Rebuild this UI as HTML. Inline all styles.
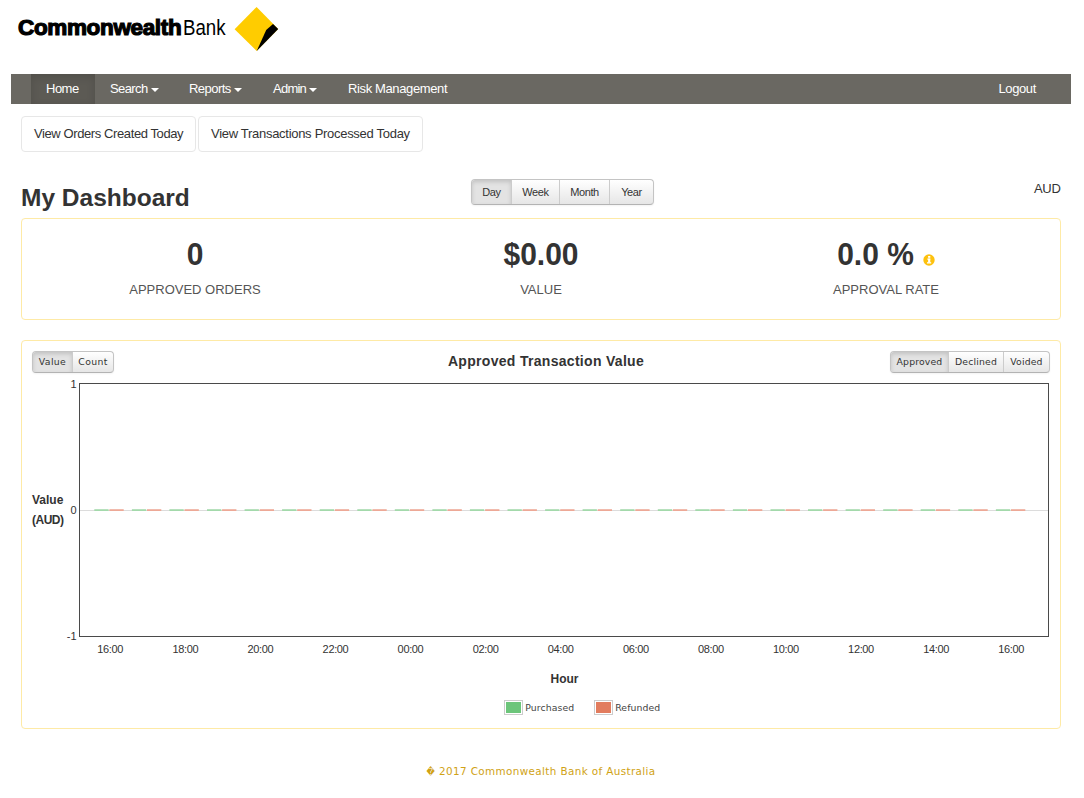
<!DOCTYPE html>
<html lang="en">
<head>
<meta charset="utf-8">
<title>My Dashboard</title>
<style>
*{box-sizing:border-box;margin:0;padding:0}
html,body{width:1084px;height:798px;background:#fff;overflow:hidden}
body{position:relative;font-family:"Liberation Sans",Arial,sans-serif;color:#333;font-size:13px}
.abs{position:absolute}
/* logo */
#logo{left:18px;top:14px;height:28px;white-space:nowrap;line-height:28px;color:#000}
#logo span{display:inline-block;transform-origin:0 50%}
#logo .cw{font-weight:bold;font-size:22.5px;letter-spacing:-0.35px;-webkit-text-stroke:1.2px #000}
#logo .bk{font-weight:normal;font-size:22px;transform:scaleX(.85);margin-left:1.5px}
#diamond{left:232px;top:5px;width:50px;height:50px}
/* navbar */
#nav{left:11px;top:74px;width:1060px;height:30px;background:#6a6862;color:#fff;font-size:13px;line-height:30px;letter-spacing:-.3px}
#nav .it{position:absolute;top:0;height:30px;white-space:nowrap}
#nav .active{background:#5c5a54;box-shadow:inset 0 3px 8px rgba(0,0,0,.125)}
.caret{display:inline-block;width:0;height:0;border-left:4px solid transparent;border-right:4px solid transparent;border-top:4px solid #fff;vertical-align:middle;margin-left:3px;margin-top:1px}
/* sub buttons */
.sbtn{top:116px;height:36px;border:1px solid #e7e7e7;border-radius:4px;line-height:34px;font-size:13px;color:#333;background:#fff;white-space:nowrap;padding-left:12px}
h1{font-size:24.5px;font-weight:bold;left:21px;top:182px;line-height:32px;color:#333;white-space:nowrap}
/* btn groups */
.bg{display:flex;border:1px solid #c4c4c4;border-bottom-color:#b3b3b3;border-radius:4px;background:linear-gradient(#ffffff,#e6e6e6);box-shadow:0 1px 2px rgba(0,0,0,.05);overflow:hidden}
.bg span{display:block;text-align:center;color:#333;border-left:1px solid #ccc;white-space:nowrap}
.bg span:first-child{border-left:0}
.bg span.on{background:#e3e3e3;box-shadow:inset 0 2px 4px rgba(0,0,0,.15)}
.panel{border:1px solid #feeaa6;border-radius:4px;background:#fff}
.stat{top:234.5px;width:346px;text-align:center}
.stat b{display:block;font-size:30px;line-height:40px;color:#333;white-space:nowrap}
.stat b span{display:inline-block;transform:scaleY(1.05);transform-origin:50% 30px}
.stat i{display:block;font-style:normal;font-size:13px;line-height:20px;color:#555;margin-top:5px}
.vd{font-family:"DejaVu Sans",Verdana,sans-serif}
</style>
</head>
<body>
<div id="logo" class="abs"><span class="cw">Commonwealth</span><span class="bk">Bank</span></div>
<svg id="diamond" class="abs" viewBox="0 0 50 50"><polygon points="24.6,2 46.2,24 24.7,46 2.6,24.2" fill="#ffcc00"/><polygon points="41,18.9 46.2,24 24.7,46 34.2,25.1" fill="#000"/></svg>

<div id="nav" class="abs">
  <div class="it active" style="left:20px;width:64px;padding-left:15px;letter-spacing:-.5px">Home</div>
  <div class="it" style="left:99px;letter-spacing:-.6px">Search<span class="caret"></span></div>
  <div class="it" style="left:178px;letter-spacing:-.55px">Reports<span class="caret"></span></div>
  <div class="it" style="left:262px;letter-spacing:-.75px">Admin<span class="caret"></span></div>
  <div class="it" style="left:337px;letter-spacing:-.37px">Risk Management</div>
  <div class="it" style="left:987.5px;letter-spacing:-.4px">Logout</div>
</div>

<div class="abs sbtn" style="left:21px;width:175px;letter-spacing:-.4px">View Orders Created Today</div>
<div class="abs sbtn" style="left:198px;width:225px;letter-spacing:-.29px">View Transactions Processed Today</div>

<h1 class="abs">My Dashboard</h1>

<div class="abs bg" style="left:471px;top:179px;width:183px;height:26px;font-size:11px;line-height:24px;letter-spacing:-.4px">
  <span class="on" style="width:39px">Day</span><span style="width:48px">Week</span><span style="width:50px">Month</span><span style="flex:1">Year</span>
</div>
<div class="abs" style="left:1034px;top:181px;font-size:13px;line-height:16px;color:#333;letter-spacing:-.3px">AUD</div>

<div class="abs panel" style="left:21px;top:218px;width:1040px;height:102px"></div>
<div class="abs stat" style="left:22px"><b><span>0</span></b><i>APPROVED ORDERS</i></div>
<div class="abs stat" style="left:368px"><b><span>$0.00</span></b><i>VALUE</i></div>
<div class="abs stat" style="left:713px"><b><span>0.0 %</span><svg width="12" height="12" viewBox="0 0 12 12" style="vertical-align:-1.5px;margin-left:9px"><circle cx="6" cy="6" r="5.7" fill="#fdc10e"/><rect x="5.1" y="2" width="2.2" height="1.8" fill="#fff"/><rect x="4.2" y="4.6" width="3.1" height="1" fill="#fff"/><rect x="5.1" y="4.6" width="2.2" height="4" fill="#fff"/><rect x="4" y="8.2" width="4.2" height="1.3" fill="#fff"/></svg></b><i>APPROVAL RATE</i></div>

<div class="abs panel" style="left:21px;top:340px;width:1040px;height:389px"></div>

<div class="abs bg vd" style="left:32px;top:351px;width:82px;height:22px;font-size:9.3px;line-height:20px;letter-spacing:.35px">
  <span class="on" style="width:39px">Value</span><span style="flex:1">Count</span>
</div>
<div class="abs" style="left:246px;top:351px;width:600px;text-align:center;font-weight:bold;font-size:14px;line-height:20px;letter-spacing:.3px">Approved Transaction Value</div>
<div class="abs bg vd" style="left:890px;top:351px;width:160px;height:22px;font-size:9.3px;line-height:20px;letter-spacing:.15px">
  <span class="on" style="width:57px">Approved</span><span style="width:55px">Declined</span><span style="flex:1">Voided</span>
</div>

<svg class="abs" style="left:0;top:375px" width="1084" height="345" viewBox="0 375 1084 345" font-family="Liberation Sans, Arial, sans-serif" id="chart">
  <rect x="80" y="510" width="968" height="1" fill="#dcdcdc"/>
  <g id="bars"><rect x="94.3" y="509" width="14.3" height="2" fill="#a3d9ab"/><rect x="109.4" y="509" width="14.3" height="2" fill="#eda896"/><rect x="131.9" y="509" width="14.3" height="2" fill="#a3d9ab"/><rect x="147.0" y="509" width="14.3" height="2" fill="#eda896"/><rect x="169.4" y="509" width="14.3" height="2" fill="#a3d9ab"/><rect x="184.5" y="509" width="14.3" height="2" fill="#eda896"/><rect x="207.0" y="509" width="14.3" height="2" fill="#a3d9ab"/><rect x="222.1" y="509" width="14.3" height="2" fill="#eda896"/><rect x="244.6" y="509" width="14.3" height="2" fill="#a3d9ab"/><rect x="259.7" y="509" width="14.3" height="2" fill="#eda896"/><rect x="282.1" y="509" width="14.3" height="2" fill="#a3d9ab"/><rect x="297.2" y="509" width="14.3" height="2" fill="#eda896"/><rect x="319.7" y="509" width="14.3" height="2" fill="#a3d9ab"/><rect x="334.8" y="509" width="14.3" height="2" fill="#eda896"/><rect x="357.3" y="509" width="14.3" height="2" fill="#a3d9ab"/><rect x="372.4" y="509" width="14.3" height="2" fill="#eda896"/><rect x="394.8" y="509" width="14.3" height="2" fill="#a3d9ab"/><rect x="409.9" y="509" width="14.3" height="2" fill="#eda896"/><rect x="432.4" y="509" width="14.3" height="2" fill="#a3d9ab"/><rect x="447.5" y="509" width="14.3" height="2" fill="#eda896"/><rect x="469.9" y="509" width="14.3" height="2" fill="#a3d9ab"/><rect x="485.1" y="509" width="14.3" height="2" fill="#eda896"/><rect x="507.5" y="509" width="14.3" height="2" fill="#a3d9ab"/><rect x="522.6" y="509" width="14.3" height="2" fill="#eda896"/><rect x="545.1" y="509" width="14.3" height="2" fill="#a3d9ab"/><rect x="560.2" y="509" width="14.3" height="2" fill="#eda896"/><rect x="582.6" y="509" width="14.3" height="2" fill="#a3d9ab"/><rect x="597.7" y="509" width="14.3" height="2" fill="#eda896"/><rect x="620.2" y="509" width="14.3" height="2" fill="#a3d9ab"/><rect x="635.3" y="509" width="14.3" height="2" fill="#eda896"/><rect x="657.8" y="509" width="14.3" height="2" fill="#a3d9ab"/><rect x="672.9" y="509" width="14.3" height="2" fill="#eda896"/><rect x="695.3" y="509" width="14.3" height="2" fill="#a3d9ab"/><rect x="710.4" y="509" width="14.3" height="2" fill="#eda896"/><rect x="732.9" y="509" width="14.3" height="2" fill="#a3d9ab"/><rect x="748.0" y="509" width="14.3" height="2" fill="#eda896"/><rect x="770.5" y="509" width="14.3" height="2" fill="#a3d9ab"/><rect x="785.6" y="509" width="14.3" height="2" fill="#eda896"/><rect x="808.0" y="509" width="14.3" height="2" fill="#a3d9ab"/><rect x="823.1" y="509" width="14.3" height="2" fill="#eda896"/><rect x="845.6" y="509" width="14.3" height="2" fill="#a3d9ab"/><rect x="860.7" y="509" width="14.3" height="2" fill="#eda896"/><rect x="883.2" y="509" width="14.3" height="2" fill="#a3d9ab"/><rect x="898.3" y="509" width="14.3" height="2" fill="#eda896"/><rect x="920.7" y="509" width="14.3" height="2" fill="#a3d9ab"/><rect x="935.8" y="509" width="14.3" height="2" fill="#eda896"/><rect x="958.3" y="509" width="14.3" height="2" fill="#a3d9ab"/><rect x="973.4" y="509" width="14.3" height="2" fill="#eda896"/><rect x="995.9" y="509" width="14.3" height="2" fill="#a3d9ab"/><rect x="1011.0" y="509" width="14.3" height="2" fill="#eda896"/></g>
  <rect x="80" y="509" width="968" height="1" fill="#fff" opacity=".22"/>
  <rect x="79.5" y="383.5" width="969" height="253" fill="none" stroke="#4a4a4a" stroke-width="1"/>
  <g font-size="11" fill="#333" text-anchor="end">
    <text x="76.5" y="388">1</text><text x="76.5" y="514">0</text><text x="76.5" y="640">-1</text>
  </g>
  <g font-size="12" font-weight="bold" fill="#333"><text x="32" y="504">Value</text><text x="32" y="523.5" letter-spacing="-0.5">(AUD)</text></g>
  <g font-size="11" fill="#333" text-anchor="middle" id="xl" letter-spacing="-0.35">
    <text x="110.2" y="653">16:00</text><text x="185.3" y="653">18:00</text><text x="260.4" y="653">20:00</text><text x="335.5" y="653">22:00</text><text x="410.5" y="653">00:00</text><text x="485.6" y="653">02:00</text><text x="560.7" y="653">04:00</text><text x="635.8" y="653">06:00</text><text x="710.9" y="653">08:00</text><text x="785.9" y="653">10:00</text><text x="861.0" y="653">12:00</text><text x="936.1" y="653">14:00</text><text x="1011.2" y="653">16:00</text>
  </g>
  <text x="564.5" y="683" font-size="12" font-weight="bold" fill="#333" text-anchor="middle">Hour</text>
  <rect x="504.5" y="700.5" width="18" height="14" fill="#fff" stroke="#ccc"/><rect x="506" y="702" width="15" height="11" fill="#6cc57a"/>
  <rect x="594.5" y="700.5" width="18" height="14" fill="#fff" stroke="#ccc"/><rect x="596" y="702" width="15" height="11" fill="#e27c5e"/>
  <g font-size="9.3" fill="#444" font-family="DejaVu Sans, Verdana, sans-serif" letter-spacing="0.1"><text x="525.2" y="711">Purchased</text><text x="615.2" y="711">Refunded</text></g>
</svg>

<div class="abs vd" style="left:-1px;top:763.5px;width:1084px;text-align:center;font-size:9.8px;line-height:16px;color:#d0a215;letter-spacing:.36px;transform:scaleX(1.06)"><span style="display:inline-block;transform:scaleX(.78);transform-origin:0 50%;margin-right:-2px">&#xFFFD;</span> 2017 Commonwealth Bank of Australia</div>
</body>
</html>
